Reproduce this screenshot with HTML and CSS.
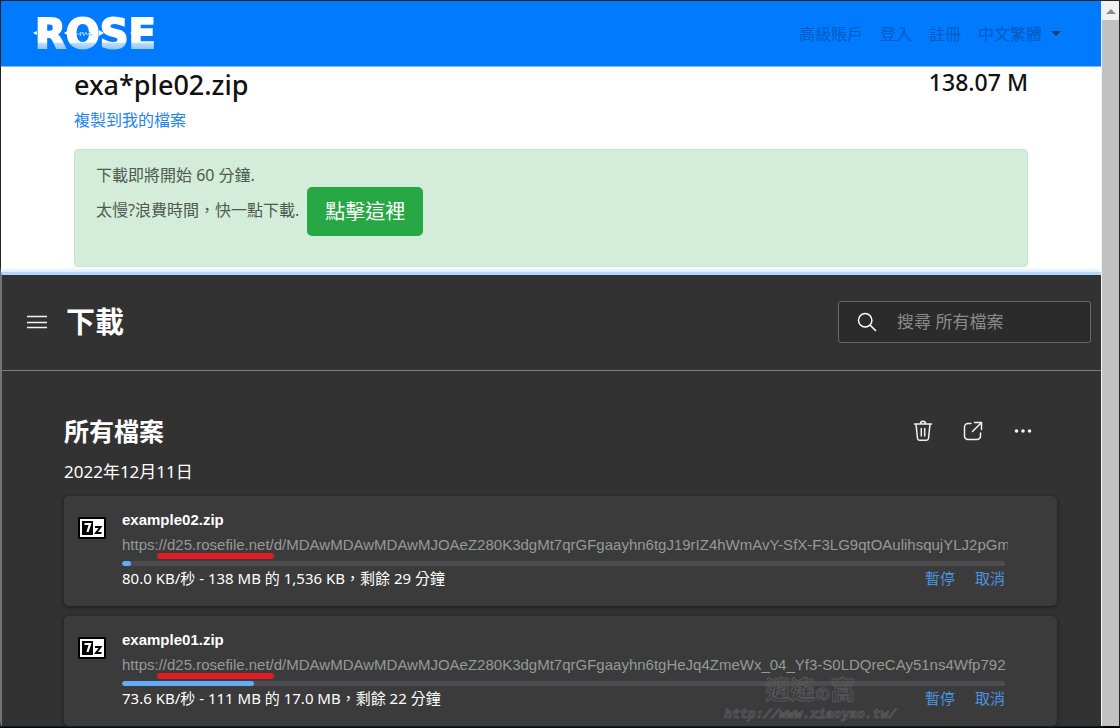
FILE: index.html
```html
<!DOCTYPE html>
<html lang="zh-Hant">
<head>
<meta charset="utf-8">
<title>下載</title>
<link rel="stylesheet" href="styles.css">
</head>
<body>
<div class="window">
  <div class="page">
    <header class="navbar">
      <a class="logo" href="#"><span class="logo-text">ROSE</span>
        <svg class="logo-marks" viewBox="0 0 126 32" aria-hidden="true">
          <path d="M0 15l4-2v4zM31 15l5-3v6zM71 15l-5 3v-6zM97 15l5-3v6z" fill="#fff"/>
          <path d="M43 16h3l2-2-1 4 3-4 1 4 2-4 1 3 3-3v3h3" fill="none" stroke="#9fcbff" stroke-width="1"/>
        </svg>
      </a>
      <nav class="nav">
        <a href="#">高級賬戶</a>
        <a href="#">登入</a>
        <a href="#">註冊</a>
        <a class="dropdown" href="#">中文繁體</a>
      </nav>
    </header>

    <main class="file">
      <div class="file-head">
        <h1 class="file-name">exa*ple02.zip</h1>
        <span class="file-size">138.07 M</span>
      </div>
      <a class="copy-link" href="#">複製到我的檔案</a>
      <div class="alert">
        <p class="alert-line">下載即將開始 60 分鐘.</p>
        <div class="alert-row">
          <p class="alert-line">太慢?浪費時間，快一點下載.</p>
          <button class="fast-button" type="button">點擊這裡</button>
        </div>
      </div>
    </main>

    <section class="downloads">
      <header class="downloads-head">
        <button class="icon-button" type="button" aria-label="選單">
          <svg width="20" height="14" viewBox="0 0 20 14"><path d="M0 1.500h20M0 7.500h20M0 12.500h20" stroke="#f2f2f2" stroke-width="1.300"/></svg>
        </button>
        <h2 class="downloads-title">下載</h2>
        <label class="search">
          <svg width="20" height="20" viewBox="0 0 20 20" aria-hidden="true"><circle cx="8.200" cy="8.200" r="6.700" fill="none" stroke="#fff" stroke-width="1.500"/><path d="M13 13l5.500 5.500" stroke="#fff" stroke-width="1.600" stroke-linecap="round"/></svg>
          <input class="search-input" type="text" placeholder="搜尋 所有檔案" aria-label="搜尋 所有檔案">
        </label>
      </header>

      <div class="downloads-body">
        <div class="section-head">
          <h3 class="section-title">所有檔案</h3>
          <div class="tools">
            <button class="icon-button" type="button" aria-label="刪除">
              <svg width="20" height="22" viewBox="0 0 20 22" fill="none" stroke="#f2f2f2" stroke-width="1.500" stroke-linecap="round" stroke-linejoin="round"><path d="M1.500 4h17M7.500 3.800a2.500 2.500 0 0 1 5 0M3 4l1.500 14.500a2 2 0 0 0 2 1.700h7a2 2 0 0 0 2-1.700L17 4M8.300 8.500v7.500M11.700 8.500v7.500"/></svg>
            </button>
            <button class="icon-button" type="button" aria-label="開啟資料夾">
              <svg width="20" height="20" viewBox="0 0 20 20" fill="none" stroke="#f2f2f2" stroke-width="1.500" stroke-linecap="round" stroke-linejoin="round"><path d="M8 2.500H5A3.500 3.500 0 0 0 1.500 6v9A3.500 3.500 0 0 0 5 18.500h9a3.500 3.500 0 0 0 3.500-3.500v-3M11.500 1.500h7v7M18.500 1.500L9.500 10.500"/></svg>
            </button>
            <button class="icon-button" type="button" aria-label="更多">
              <svg width="20" height="20" viewBox="0 0 20 20" fill="#f2f2f2"><circle cx="3.500" cy="10" r="1.800"/><circle cx="10" cy="10" r="1.800"/><circle cx="16.500" cy="10" r="1.800"/></svg>
            </button>
          </div>
        </div>
        <p class="date">2022年12月11日</p>

        <ul class="list">
          <li class="card">
            <svg class="archive" width="28" height="22" viewBox="0 0 28 22" aria-hidden="true"><rect width="28" height="22" rx="1"/><rect x="2" y="2" width="24" height="18" fill="#fff"/><rect x="4" y="4" width="11" height="14"/><path d="M6.500 7h5.500L9.500 15" fill="none" stroke="#fff" stroke-width="2.200"/><path d="M17 10h5.500l-4.500 6h5.500" fill="none" stroke="#000" stroke-width="2"/></svg>
            <div class="info">
              <p class="name">example02.zip</p>
              <p class="url">https://d25.rosefile.net/d/MDAwMDAwMDAwMJOAeZ280K3dgMt7qrGFgaayhn6tgJ19rIZ4hWmAvY-SfX-F3LG9qtOAulihsqujYLJ2pGm</p>
              <span class="marker"></span>
              <progress class="bar" max="100" value="1" aria-label="example02.zip"></progress>
              <div class="status"><p class="speed">80.0 KB/秒 - 138 MB 的 1,536 KB，剩餘 29 分鐘</p><button class="action" type="button">暫停</button><button class="action" type="button">取消</button></div>
            </div>
          </li>
          <li class="card">
            <svg class="archive" width="28" height="22" viewBox="0 0 28 22" aria-hidden="true"><rect width="28" height="22" rx="1"/><rect x="2" y="2" width="24" height="18" fill="#fff"/><rect x="4" y="4" width="11" height="14"/><path d="M6.500 7h5.500L9.500 15" fill="none" stroke="#fff" stroke-width="2.200"/><path d="M17 10h5.500l-4.500 6h5.500" fill="none" stroke="#000" stroke-width="2"/></svg>
            <div class="info">
              <p class="name">example01.zip</p>
              <p class="url">https://d25.rosefile.net/d/MDAwMDAwMDAwMJOAeZ280K3dgMt7qrGFgaayhn6tgHeJq4ZmeWx_04_Yf3-S0LDQreCAy51ns4Wfp792</p>
              <span class="marker"></span>
              <progress class="bar" max="100" value="15" aria-label="example01.zip"></progress>
              <div class="status"><p class="speed">73.6 KB/秒 - 111 MB 的 17.0 MB，剩餘 22 分鐘</p><button class="action" type="button">暫停</button><button class="action" type="button">取消</button></div>
            </div>
            <div class="watermark"><span class="watermark-name">逍遙<small>の</small>窩</span><span class="watermark-url">http://www.xiaoyao.tw/</span></div>
          </li>
        </ul>
      </div>
    </section>
  </div>
  <div class="scrollbar" aria-hidden="true">
    <div class="scroll-up"><svg width="10" height="6" viewBox="0 0 10 6"><path d="M0 6l5-5 5 5z" fill="#8a8a8a"/></svg></div>
    <div class="scroll-thumb"></div>
  </div>
</div>
</body>
</html>
```

FILE: styles.css
```css
* { box-sizing: border-box; }

body {
  margin: 0;
  font-family: "Noto Sans", "Noto Sans CJK TC", sans-serif;
  font-size: 16px;
  line-height: 24px;
}

h1, h2, h3, p, ul { margin: 0; padding: 0; }
a { text-decoration: none; color: inherit; }
button { padding: 0; border: 0; background: none; font: inherit; color: inherit; cursor: pointer; }

.window {
  display: grid;
  grid-template-columns: 1fr 18px;
  min-height: 100vh;
  border: 1px solid #222;
  border-bottom: 2px solid #000;
  background: #fff;
}

.page { display: flex; flex-direction: column; min-width: 0; }

.navbar {
  display: flex;
  align-items: center;
  justify-content: space-between;
  height: 66px;
  padding: 0 40px 0 32px;
  background: #007bff;
  border-bottom: 1px solid #80bdff;
}

.logo { position: relative; display: block; }
.logo-text {
  display: block;
  padding: 0 2px;
  font: bold 40px/40px "DejaVu Sans", sans-serif;
  color: transparent;
  background: linear-gradient(#fff 70%, #b9daff 74%, #8dc3ff 90%);
  background-clip: text;
  -webkit-background-clip: text;
  -webkit-text-stroke: 2px transparent;
}
.logo-marks { position: absolute; left: 0; top: 4px; width: 126px; height: 32px; }

.nav { display: flex; gap: 17px; color: #005cbf; }
.dropdown { display: flex; align-items: center; gap: 9px; }
.dropdown::after {
  content: "";
  border: 5px solid transparent;
  border-top-color: #1f3f66;
  border-bottom: 0;
}

.file { padding: 0 73px 5px; color: #111; }
.file-head { display: flex; justify-content: space-between; align-items: flex-start; }
.file-name { font-size: 27px; font-weight: 500; line-height: 36px; }
.file-size { font-size: 23px; font-weight: 500; line-height: 30px; }
.copy-link { display: block; margin-top: 5px; color: #2385f0; }

.alert {
  min-height: 118px;
  margin-top: 17px;
  padding: 13px 21px;
  border: 1px solid #c3e6cb;
  border-radius: 4px;
  background: #d4edda;
  color: #4c5a50;
}
.alert-row { display: flex; align-items: flex-start; gap: 8px; }
.alert-row .alert-line { padding-top: 11px; }
.fast-button {
  padding: 9px 18px;
  border-radius: 5px;
  background: #28a745;
  color: #fff;
  font-size: 20px;
  line-height: 31px;
}

.downloads {
  flex: 1;
  border-top: 3px solid #b3d7ff;
  border-left: 1px solid #777;
  box-shadow: 0 -2px 4px #d9eafa;
  background: #323232;
  color: #fff;
}
.downloads-head {
  display: flex;
  align-items: center;
  height: 96px;
  padding: 0 10px 2px 25px;
  border-bottom: 1px solid #7c7c7c;
}
.icon-button { display: flex; align-items: center; justify-content: center; }
.downloads-title { margin-left: 19px; font-size: 29px; line-height: 40px; font-weight: 700; }
.search {
  display: flex;
  align-items: center;
  gap: 20px;
  width: 253px;
  height: 42px;
  margin-left: auto;
  padding: 0 18px;
  border: 1px solid #686868;
  border-radius: 3px;
  background: #2b2b2b;
}
.search svg { flex: none; }
.search-input {
  min-width: 0;
  flex: 1;
  padding: 0;
  border: 0;
  outline: 0;
  background: none;
  color: #fff;
  font: inherit;
  font-size: 17px;
}
.search-input::placeholder { color: #8a8a8a; opacity: 1; }

.downloads-body { padding: 43px 44px 0 62px; }
.section-head { display: flex; align-items: center; justify-content: space-between; }
.section-title { font-size: 25px; line-height: 34px; font-weight: 700; }
.tools { display: flex; gap: 30px; padding-right: 24px; }
.date { margin-top: 12px; font-size: 17px; line-height: 24px; }

.list { display: flex; flex-direction: column; gap: 10px; margin-top: 12px; list-style: none; }
.card {
  position: relative;
  display: flex;
  gap: 16px;
  height: 110px;
  padding: 14px 49px 0 14px;
  border-radius: 5px;
  background: #3b3b3b;
  box-shadow: 0 1px 4px #1c1c1c;
}
.archive { flex: none; margin-top: 7px; }
.info { position: relative; flex: 1; min-width: 0; font-size: 15px; line-height: 20px; }
.name { font-family: "Liberation Sans", sans-serif; font-weight: 700; }
.url {
  margin-top: 5px;
  overflow: hidden;
  white-space: nowrap;
  font-family: "Liberation Sans", sans-serif;
  color: #959a97;
}
.marker {
  position: absolute;
  left: 35px;
  top: 43px;
  width: 117px;
  height: 6px;
  border-radius: 3px;
  background: #e21b22;
}
.bar {
  display: block;
  appearance: none;
  width: calc(100% - 3px);
  height: 5px;
  margin-top: 6px;
  border: 0;
  border-radius: 3px;
  overflow: hidden;
  background: #4d4d50;
}
.bar::-webkit-progress-bar { background: #4d4d50; }
.bar::-webkit-progress-value { border-radius: 3px; background: #62abf5; }
.status { display: flex; gap: 20px; margin-top: 2px; padding-right: 3px; }
.speed { flex: 1; }
.action { color: #4a93e0; }

.watermark {
  position: absolute;
  right: 161px;
  bottom: 4px;
  display: flex;
  flex-direction: column;
  align-items: center;
  color: transparent;
  -webkit-text-stroke: 1px #57575a;
}
.watermark-name { font-size: 25px; line-height: 28px; font-weight: 700; }
.watermark-name small { font-size: 15px; }
.watermark-url { font: italic bold 13px/15px "Liberation Mono", monospace; }

.scrollbar { display: flex; flex-direction: column; padding-left: 1px; background: #f1f1f1; }
.scroll-up { display: flex; align-items: center; justify-content: center; height: 19px; }
.scroll-thumb { flex: 1; background: #c1c1c1; }
```
